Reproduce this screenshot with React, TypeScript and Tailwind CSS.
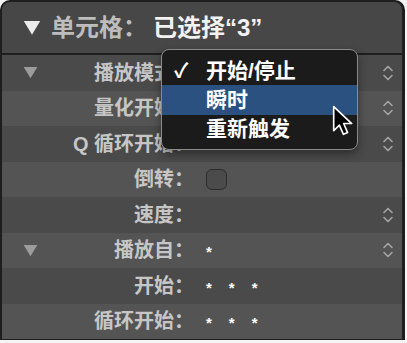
import React from "react";

const font = { fontFamily: '"Liberation Sans", "Noto Sans CJK SC", sans-serif' };

function Stepper() {
  return (
    <svg width="12" height="20" viewBox="0 0 12 20" className="text-[#a4a4a4]">
      <path d="M2 7.5 L6 3.5 L10 7.5" fill="none" stroke="currentColor" strokeWidth="1.6" strokeLinecap="round" strokeLinejoin="round" />
      <path d="M2 12.5 L6 16.5 L10 12.5" fill="none" stroke="currentColor" strokeWidth="1.6" strokeLinecap="round" strokeLinejoin="round" />
    </svg>
  );
}

function Disclosure({ color, w = 16 }: { color: string; w?: number }) {
  return (
    <svg width={w} height={w * 0.85} viewBox="0 0 16 14">
      <path d="M0.5 1 L15.5 1 L8 13.5 Z" fill={color} />
    </svg>
  );
}

function Stars({ n }: { n: number }) {
  return (
    <div className="flex gap-[17px] text-white text-[15px] font-bold pt-[4px]">
      {Array.from({ length: n }).map((_, i) => (
        <span key={i}>*</span>
      ))}
    </div>
  );
}

type Row = {
  label: string;
  disclosure?: boolean;
  stepper?: boolean;
  value?: React.ReactNode;
};

const rows: Row[] = [
  { label: "播放模式：", disclosure: true, stepper: true },
  { label: "量化开始：", stepper: true },
  { label: "Q 循环开始：", stepper: true },
  {
    label: "倒转：",
    value: <div className="w-[21px] h-[21px] rounded-[6px] border border-[#2c2c2c] bg-[#4b4b4b]" />,
  },
  { label: "速度：", stepper: true },
  { label: "播放自：", disclosure: true, stepper: true, value: <Stars n={1} /> },
  { label: "开始：", value: <Stars n={3} /> },
  { label: "循环开始：", value: <Stars n={3} /> },
];

function Cursor() {
  return (
    <svg width="25" height="35" viewBox="0 0 24 34">
      <path
        d="M1.5 1.5 L1.5 25 L7 19.5 L11 28.5 L15 26.8 L11.2 18 L19 18 Z"
        fill="#000"
        stroke="#fff"
        strokeWidth="1.6"
        strokeLinejoin="round"
      />
    </svg>
  );
}

export default function App() {
  return (
    <div className="w-[407px] h-[343px] bg-[#f4f4f4] relative overflow-hidden" style={font}>
      <div className="w-[405px] h-[340px] bg-[#1e1e1e] rounded-t-[10px] pl-[2px] pr-[3px] pt-[2px] flex flex-col">
        {/* Header */}
        <div className="h-[51px] bg-[#474747] rounded-t-[8px] flex items-center pl-[21px] shrink-0">
          <Disclosure color="#ececec" w={18} />
          <span className="ml-[10px] text-[24px] font-semibold text-[#bdbdbd]">单元格：</span>
          <span className="ml-[6px] text-[24px] font-semibold text-[#f2f2f2]">已选择“3”</span>
        </div>
        <div className="h-[2px] shrink-0" />
        {/* Rows */}
        <div className="flex flex-col">
          {rows.map((r, i) => (
            <div
              key={r.label}
              className={`h-[35.5px] flex items-center ${i % 2 === 0 ? "bg-[#4a4a4a]" : "bg-[#545454]"}`}
            >
              <div className="w-[40px] pl-[21px] flex items-center">
                {r.disclosure && <Disclosure color="#9c9c9c" w={15} />}
              </div>
              <div className="w-[152px] text-right text-[20px] font-semibold text-[#c6c6c6] whitespace-nowrap">
                {r.label}
              </div>
              <div className="flex-1 pl-[12px] flex items-center">{r.value}</div>
              <div className="w-[20px] flex items-center">{r.stepper && <Stepper />}</div>
            </div>
          ))}
        </div>
      </div>

      {/* Popup menu */}
      <div className="absolute left-[161px] top-[49px] w-[197px] h-[101px] rounded-[8px] border border-[#8a8a8a] bg-[#1b1b1b] shadow-[0_4px_10px_rgba(0,0,0,0.4)] py-[7px] flex flex-col">
        <div className="h-[28px] flex items-center text-white text-[21px] font-semibold">
          <span className="w-[44px] pl-[12px] text-[20px] leading-none">✓</span>
          <span>开始/停止</span>
        </div>
        <div className="h-[30px] flex items-center text-white text-[21px] font-semibold bg-[#2a5180]">
          <span className="w-[44px]" />
          <span>瞬时</span>
        </div>
        <div className="h-[28px] flex items-center text-white text-[21px] font-semibold">
          <span className="w-[44px]" />
          <span>重新触发</span>
        </div>
      </div>

      <div className="absolute left-[332px] top-[105px]">
        <Cursor />
      </div>
    </div>
  );
}
